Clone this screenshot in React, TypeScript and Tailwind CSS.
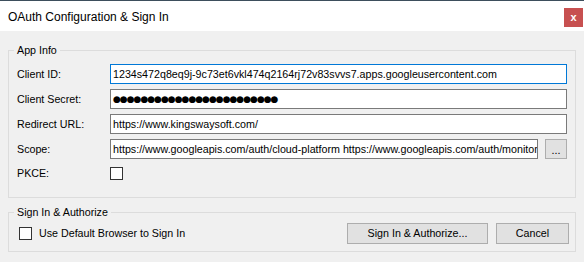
import React from "react";

export default function App() {
  const dots = "●".repeat(24);
  return (
    <div className="w-[584px] h-[262px] bg-[#f0f0f0] border-t border-[#3d4e5c] font-['Liberation_Sans',Arial,sans-serif] text-[10.7px] leading-[13px] text-black overflow-hidden">
      <div className="h-[30px] bg-white flex justify-between">
        <div className="pl-[8px] pt-[9px] text-[12px] leading-[14px]">OAuth Configuration &amp; Sign In</div>
        <div className="mt-[7px] mr-[1px] w-[19px] h-[19px] bg-[#c75050] text-white flex items-center justify-center text-[11px] font-bold leading-none pb-[1px]">
          x
        </div>
      </div>
      <div className="px-[8px]">
        <fieldset className="min-w-0 mt-[13px] border border-[#dcdcdc] pl-[5px] pr-[8px] pt-[7px] pb-[17px]">
          <legend className="px-[3px] leading-[13px]">App Info</legend>
          <div className="pl-[3px] flex flex-col gap-[5px]">
            <div className="flex items-center h-[20px]">
              <div className="w-[93px] shrink-0">Client ID:</div>
              <div className="flex-1 min-w-0 h-[20px] border border-[#0078d7] bg-white px-[2px] flex items-center whitespace-nowrap overflow-hidden">
                1234s472q8eq9j-9c73et6vkl474q2164rj72v83svvs7.apps.googleusercontent.com
              </div>
            </div>
            <div className="flex items-center h-[20px]">
              <div className="w-[93px] shrink-0">Client Secret:</div>
              <div className="flex-1 min-w-0 h-[20px] border border-[#7a7a7a] bg-white px-[2px] flex items-center whitespace-nowrap overflow-hidden text-[9px] tracking-[-1px] font-['DejaVu_Sans',sans-serif]">
                {dots}
              </div>
            </div>
            <div className="flex items-center h-[20px]">
              <div className="w-[93px] shrink-0">Redirect URL:</div>
              <div className="flex-1 min-w-0 h-[20px] border border-[#7a7a7a] bg-white px-[2px] flex items-center whitespace-nowrap overflow-hidden">
                https://www.kingswaysoft.com/
              </div>
            </div>
            <div className="flex items-center h-[20px]">
              <div className="w-[93px] shrink-0">Scope:</div>
              <div className="flex-1 min-w-0 h-[20px] border border-[#7a7a7a] bg-white px-[2px] flex items-center whitespace-nowrap overflow-hidden">
                https://www.googleapis.com/auth/cloud-platform https://www.googleapis.com/auth/monitoring
              </div>
              <div className="ml-[7px] shrink-0 w-[22px] h-[20px] border border-[#adadad] bg-[#e1e1e1] flex items-center justify-center pt-[2px]">
                ...
              </div>
            </div>
            <div className="flex items-center h-[13px] mt-[3px]">
              <div className="w-[93px] shrink-0">PKCE:</div>
              <div className="w-[13px] h-[13px] border border-[#333333] bg-white" />
            </div>
          </div>
        </fieldset>
        <fieldset className="min-w-0 mt-[8px] border border-[#dcdcdc] pl-[5px] pr-[6px] pt-[4px] pb-[7px]">
          <legend className="px-[3px] leading-[13px]">Sign In &amp; Authorize</legend>
          <div className="pl-[5px] flex items-center h-[21px]">
            <div className="w-[13px] h-[13px] shrink-0 border border-[#333333] bg-white" />
            <div className="ml-[7px]">Use Default Browser to Sign In</div>
            <div className="ml-auto flex gap-[8px]">
              <div className="w-[141px] h-[21px] border border-[#adadad] bg-[#e1e1e1] flex items-center justify-center">
                Sign In &amp; Authorize...
              </div>
              <div className="w-[73px] h-[21px] border border-[#adadad] bg-[#e1e1e1] flex items-center justify-center">
                Cancel
              </div>
            </div>
          </div>
        </fieldset>
      </div>
    </div>
  );
}
